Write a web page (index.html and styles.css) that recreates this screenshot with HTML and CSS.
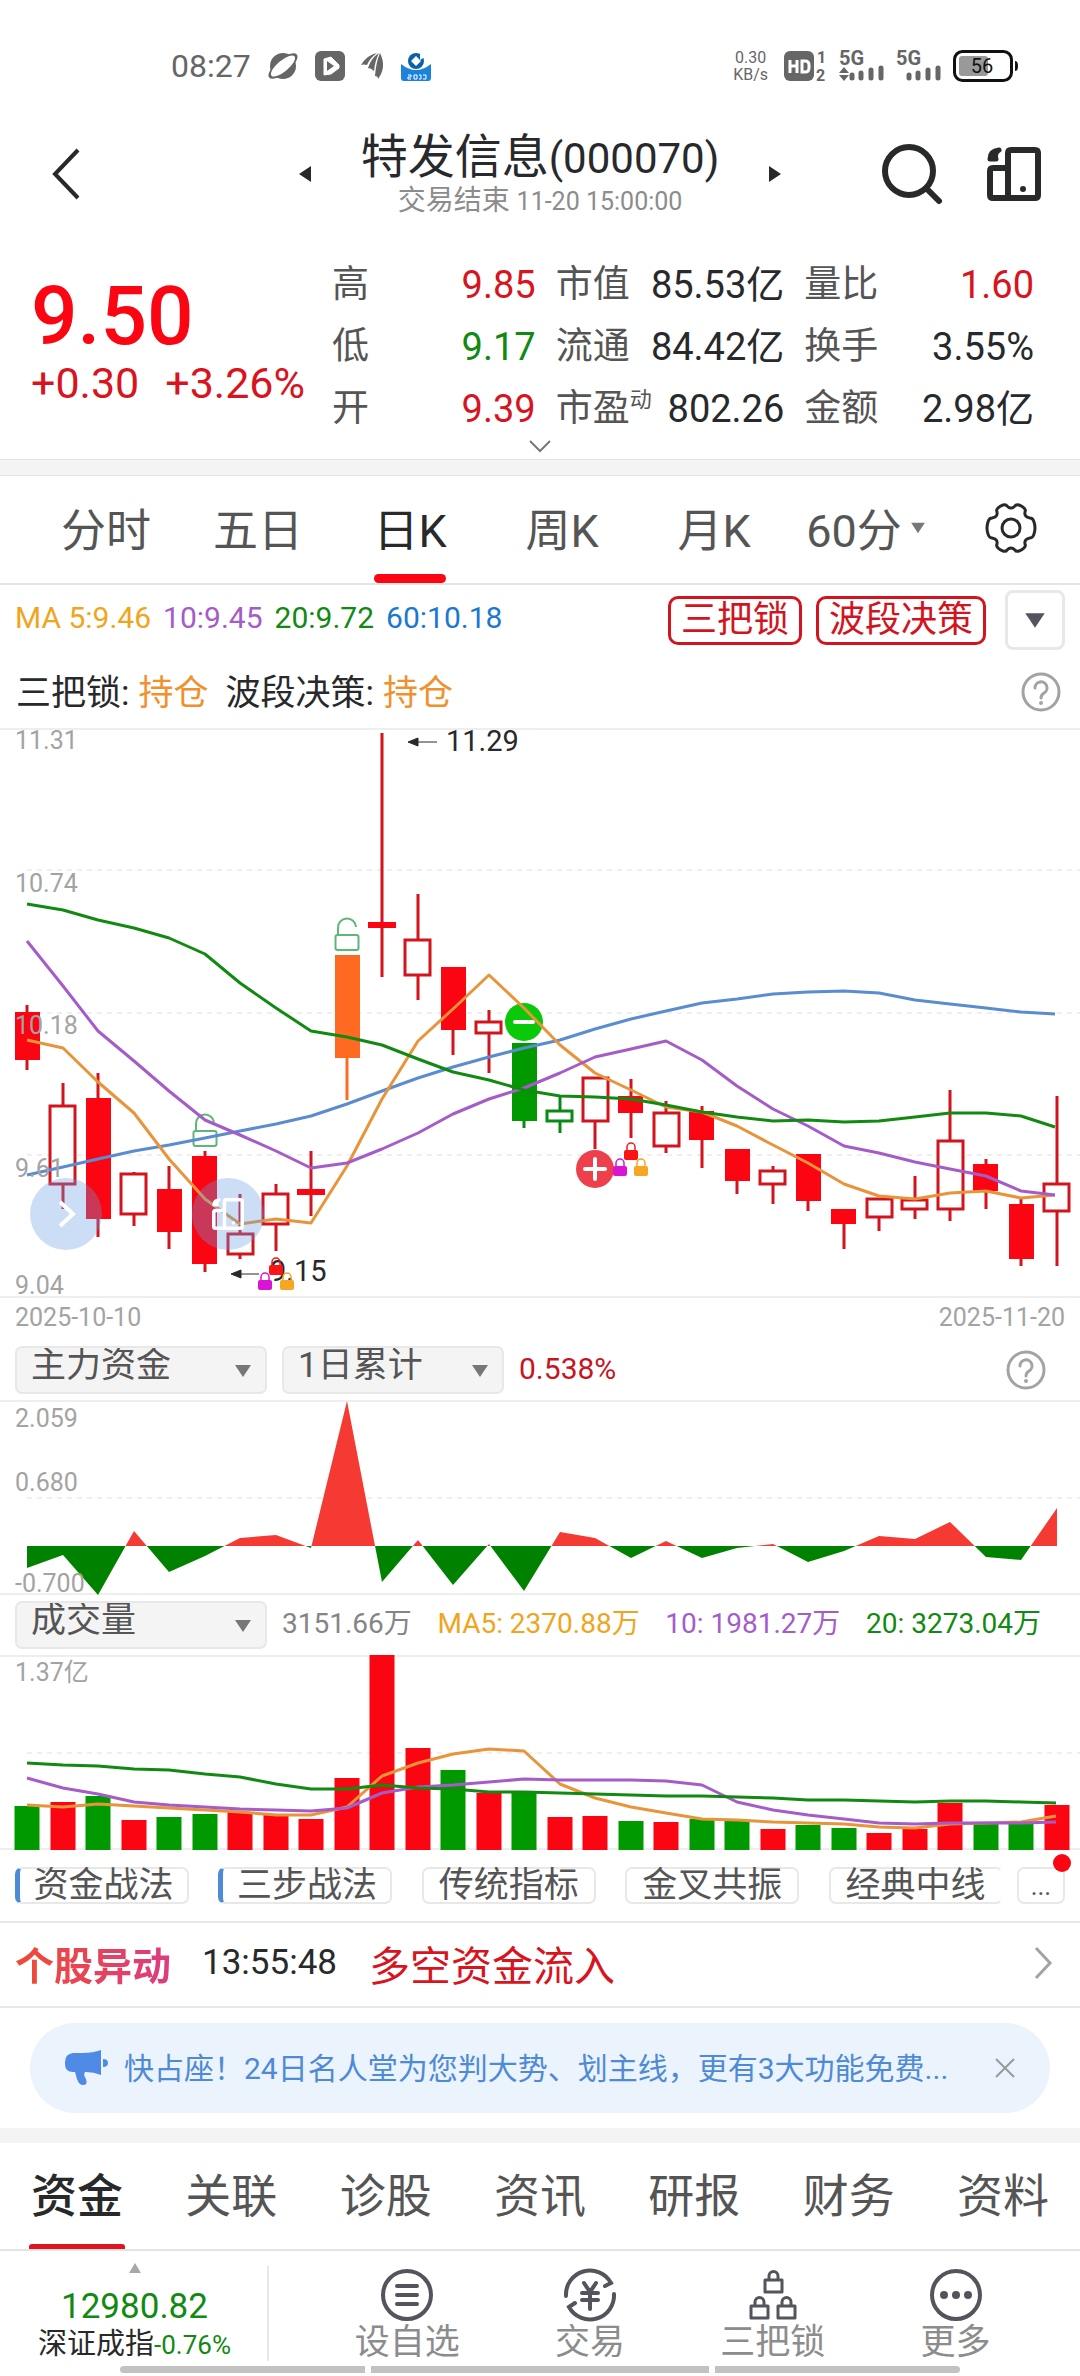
FILE: index.html
```html
<!DOCTYPE html>
<html lang="zh-CN">
<head>
<meta charset="utf-8">
<meta name="viewport" content="width=device-width, initial-scale=1">
<title>特发信息(000070)</title>
<link rel="stylesheet" href="styles.css">
</head>
<body>
<svg class="defs" aria-hidden="true">
  <defs>
    <symbol id="help" viewBox="0 0 40 40"><circle cx="20" cy="20" r="18" fill="none" stroke="#a3a3a3" stroke-width="3"/><path d="M14 16a6 6 0 1 1 9 5q-3 2-3 5" fill="none" stroke="#a3a3a3" stroke-width="3" stroke-linecap="round"/><circle cx="20" cy="31" r="2" fill="#a3a3a3"/></symbol>
    <symbol id="down" viewBox="0 0 18 14"><path d="M1 1h16l-8 12z" fill="currentColor"/></symbol>
    <symbol id="lock" viewBox="0 0 14 19"><path d="M3 9V6a4 4 0 0 1 8 0v3" fill="none" stroke="currentColor" stroke-width="1.5"/><rect y="9" width="14" height="10" rx="2" fill="currentColor"/></symbol>
    <symbol id="unlock" viewBox="0 0 26 36"><path d="M4 18v-7a9 9 0 0 1 18-1" fill="none" stroke="#5cb878" stroke-width="2"/><rect x="1.5" y="18" width="23" height="15" rx="2" fill="none" stroke="#5cb878" stroke-width="2"/></symbol>
    <symbol id="phones" viewBox="0 0 54 54"><path d="M21 51V6q0-3 3-3h24q3 0 3 3v42q0 3-3 3H6q-3 0-3-3V24q0-3 3-3h15" fill="none" stroke="currentColor" stroke-width="6" stroke-linejoin="round"/><path d="M12 3Q3 4 3 12H9Q7 6 12 3Z" fill="currentColor" stroke="currentColor" stroke-width="5" stroke-linejoin="round"/><circle cx="36" cy="42" r="3" fill="currentColor"/></symbol>
    <symbol id="openlock" viewBox="0 0 21 25"><path d="M6 11V7a4.500 4.500 0 0 1 9 0v4M2 11h17v12H2z" fill="none" stroke="currentColor" stroke-width="3" stroke-linejoin="round"/></symbol>
  </defs>
</svg>

<div class="status">
  <div class="status-side">
    <span class="clock">08:27</span>
    <svg width="32" height="30" viewBox="0 0 32 30"><circle cx="16" cy="15" r="13" fill="#666"/><ellipse cx="16" cy="15" rx="18" ry="7" transform="rotate(-40 16 15)" fill="#666"/><ellipse cx="16" cy="15" rx="15" ry="5.5" transform="rotate(-40 16 15)" fill="#fff"/></svg>
    <svg width="30" height="30" viewBox="0 0 30 30"><rect width="30" height="30" rx="6" fill="#666"/><path d="M9 8l7-2 8 8v3l-8 6-7 1z" fill="#fff" stroke="#fff" stroke-linejoin="round"/><path d="M12 10l7 5-7 5z" fill="#666"/></svg>
    <svg width="24" height="28" viewBox="0 0 24 28"><path d="M0 13Q6 3 16 1 9 6 6 13 3 12 0 13ZM7 16Q10 6 18 1 14 9 13 19 10 16 7 16ZM14 24Q15 10 19 1 26 15 17 27 17 24 14 24Z" fill="#666"/></svg>
    <svg width="30" height="30" viewBox="0 0 30 30"><path d="M0 13q15 12 30 0v14q0 3-3 3H3q-3 0-3-3z" fill="#1c83dc"/><circle cx="15" cy="10" r="8" fill="#0a62a8"/><path d="M15 5l5 5-5 5-5-5zM19 2l5 4-5 3z" fill="#fff"/><path d="M7 24h3v2H7v2h3M13 24h3v4h-3zM18 24h2v4h-2M22 24h3v4h-3" fill="none" stroke="#fff"/></svg>
  </div>
  <div class="status-side status-right">
    <span class="rate">0.30<br>KB/s</span>
    <svg width="44" height="30" viewBox="0 0 44 30" fill="#666"><rect width="30" height="30" rx="6"/><path d="M6 9v13M13 9v13M6 15h7M18 10v11h3q4 0 4-4v-3q0-4-4-4z" fill="none" stroke="#fff" stroke-width="3"/><text x="33" y="12" class="sim">1</text><text x="32" y="30" class="sim">2</text></svg>
    <svg width="46" height="30" viewBox="0 0 46 30" fill="#666"><text x="0" y="14" class="net">5G</text><path d="M5 16l5 6H0zM5 30l5-6H0z"/><path d="M13 24v3M22 22v5M32 19v8M42 17v10" stroke="#666" stroke-width="5" stroke-linecap="round"/></svg>
    <svg width="46" height="30" viewBox="0 0 46 30" fill="#666"><text x="0" y="14" class="net">5G</text><path d="M13 24v3M22 22v5M32 19v8M42 17v10" stroke="#666" stroke-width="5" stroke-linecap="round"/></svg>
    <svg width="66" height="32" viewBox="0 0 66 32"><rect x="1.5" y="1.5" width="57" height="29" rx="8" fill="none" stroke="#111" stroke-width="3"/><rect x="6" y="6" width="29" height="20" rx="3" fill="#999"/><path d="M62 11q3 0 3 5t-3 5z" fill="#111"/><text x="29" y="23" class="charge" text-anchor="middle">56</text></svg>
  </div>
</div>

<header class="head">
  <button class="plain" aria-label="返回"><svg width="28" height="52" viewBox="0 0 28 52"><path d="M25 2L2 26l23 24" fill="none" stroke="#28292b" stroke-width="4"/></svg></button>
  <div class="head-mid">
    <button class="plain" aria-label="上一只"><svg width="12" height="16" viewBox="0 0 12 16"><path d="M0 8L12 0v16z" fill="#28292b"/></svg></button>
    <div class="title">
      <h1>特发信息<span>(000070)</span></h1>
      <p>交易结束 <span>11-20 15:00:00</span></p>
    </div>
    <button class="plain" aria-label="下一只"><svg width="12" height="16" viewBox="0 0 12 16"><path d="M12 8L0 0v16z" fill="#28292b"/></svg></button>
  </div>
  <div class="head-end">
    <button class="plain" aria-label="搜索"><svg width="60" height="60" viewBox="0 0 60 60" fill="none" stroke="#28292b" stroke-width="6" stroke-linecap="round"><circle cx="27" cy="27" r="24"/><path d="M45 45l12 12"/></svg></button>
    <button class="plain" aria-label="分屏"><svg width="54" height="54"><use href="#phones"/></svg></button>
  </div>
</header>

<section class="quote">
  <div class="price">
    <strong>9.50</strong>
    <p><span>+0.30</span><span>+3.26%</span></p>
  </div>
  <dl class="stats">
    <div><dt>高</dt><dd class="up">9.85</dd></div>
    <div><dt>市值</dt><dd>85.53亿</dd></div>
    <div><dt>量比</dt><dd class="up">1.60</dd></div>
    <div><dt>低</dt><dd class="down">9.17</dd></div>
    <div><dt>流通</dt><dd>84.42亿</dd></div>
    <div><dt>换手</dt><dd>3.55%</dd></div>
    <div><dt>开</dt><dd class="up">9.39</dd></div>
    <div><dt>市盈<sup>动</sup></dt><dd>802.26</dd></div>
    <div><dt>金额</dt><dd>2.98亿</dd></div>
  </dl>
</section>
<button class="plain expand" aria-label="展开"><svg width="22" height="12" viewBox="0 0 22 12"><path d="M1 1l10 10L21 1" fill="none" stroke="#777" stroke-width="2"/></svg></button>
<div class="band band-lined"></div>

<nav class="periods">
  <button>分时</button>
  <button>五日</button>
  <button class="on">日K</button>
  <button>周K</button>
  <button>月K</button>
  <button>60分<svg width="16" height="12"><use href="#down"/></svg></button>
  <button aria-label="设置"><svg width="50" height="50" viewBox="0 0 50 50" fill="none" stroke="#28292b" stroke-width="3" stroke-linejoin="round"><path d="M17 2q3-1 4 1 4 4 8 0 1-2 4-1 3 1 5 3 2 2 1 4-1 5 5 6 3 0 4 4 2 6 0 12-1 4-4 4-6 1-5 6 1 2-1 4-2 2-5 3-3 1-4-1-4-4-8 0-1 2-4 1-3-1-5-3-2-2-1-4 1-5-5-6-3 0-4-4-2-6 0-12 1-4 4-4 6-1 5-6-1-2 1-4 2-2 5-3z"/><circle cx="25" cy="25" r="9"/></svg></button>
</nav>

<div class="ma-row">
  <p class="ma"><span class="c5">MA 5:9.46</span><span class="c10">10:9.45</span><span class="c20">20:9.72</span><span class="c60">60:10.18</span></p>
  <button class="tag">三把锁</button>
  <button class="tag">波段决策</button>
  <button class="more-ind" aria-label="更多指标"><svg width="22" height="17"><use href="#down"/></svg></button>
</div>
<div class="signal">
  <p><span>三把锁:</span><b>持仓</b></p>
  <p><span>波段决策:</span><b>持仓</b></p>
  <button class="plain help" aria-label="帮助"><svg width="40" height="40"><use href="#help"/></svg></button>
</div>

<div class="kline">
  <svg class="chart" viewBox="0 0 1080 570">
    <path d="M0 1H1080M0 569H1080" stroke="#eee" stroke-width="2"/>
    <path d="M27 142H1080M27 285H1080M27 427H1080" stroke="#efefef" stroke-width="2" stroke-dasharray="5 5"/>
    <path d="M27 277V342M63 355V481M98 345V509M134 444V498M169 438V521M205 423V544M240 466V531M276 456V523M311 423V488M382 5V249M418 166V272M453 239V327M489 282V345M595 349V421M631 351V410M666 373V425M702 378V440M737 421V466M773 438V476M808 426V483M844 481V521M879 470V503M915 448V491M950 362V493M986 431V481M1021 470V538M1057 368V538" stroke="#d2141e" stroke-width="3"/>
    <g fill="#fa0511">
      <rect x="15" y="284" width="25" height="48"/><rect x="86" y="370" width="25" height="121"/><rect x="157" y="461" width="25" height="43"/><rect x="192" y="428" width="25" height="108"/><rect x="297" y="461" width="28" height="6"/><rect x="368" y="194" width="28" height="6"/><rect x="441" y="239" width="25" height="63"/><rect x="618" y="368" width="25" height="17"/><rect x="689" y="383" width="25" height="29"/><rect x="725" y="421" width="25" height="32"/><rect x="796" y="426" width="25" height="47"/><rect x="831" y="481" width="25" height="15"/><rect x="973" y="436" width="25" height="27"/><rect x="1009" y="476" width="25" height="55"/>
    </g>
    <g fill="#fff" stroke="#d2141e" stroke-width="3">
      <rect x="50" y="378" width="25" height="78"/><rect x="121" y="446" width="25" height="40"/><rect x="228" y="506" width="25" height="20"/><rect x="263" y="466" width="25" height="30"/><rect x="405" y="212" width="25" height="35"/><rect x="476" y="294" width="25" height="11"/><rect x="583" y="350" width="25" height="43"/><rect x="654" y="385" width="25" height="33"/><rect x="760" y="443" width="25" height="13"/><rect x="867" y="471" width="25" height="18"/><rect x="902" y="472" width="25" height="9"/><rect x="938" y="413" width="25" height="68"/><rect x="1044" y="456" width="25" height="27"/>
    </g>
    <path d="M347 330V372" stroke="#ff6a22" stroke-width="3"/><rect x="335" y="227" width="25" height="103" fill="#ff6a22"/>
    <path d="M524 315V400M560 369V405" stroke="#0a8a14" stroke-width="3"/><rect x="512" y="315" width="25" height="78" fill="#009a00"/><rect x="547" y="383" width="25" height="10" fill="#fff" stroke="#0a8a14" stroke-width="3"/>
    <use href="#unlock" x="334" y="189" width="26" height="36"/><use href="#unlock" x="192" y="385" width="26" height="36"/>
    <circle cx="524" cy="294" r="19" fill="#0ac80a"/><path d="M515 294h18" stroke="#fff" stroke-width="4" stroke-linecap="round"/>
    <g fill="none" stroke-width="3" stroke-linejoin="round">
      <polyline stroke="#5a8ccf" points="27,447 63,439 98,431 134,423 169,417 205,410 240,403 276,396 311,388 347,376 382,363 418,350 453,339 489,329 524,320 560,312 595,301 631,291 666,283 702,275 737,271 773,266 808,264 844,263 879,265 915,272 950,276 986,280 1021,284 1055,286"/>
      <polyline stroke="#e8943a" points="27,312 63,320 98,354 134,385 169,431 205,471 240,496 276,491 311,495 347,438 382,371 418,313 453,281 489,247 524,280 560,317 595,345 631,362 666,379 702,384 737,398 773,417 808,435 844,456 879,468 915,471 950,465 986,463 1021,470 1055,467"/>
      <polyline stroke="#a55cc8" points="27,213 63,258 98,303 134,333 169,363 205,392 240,407 276,423 311,440 347,435 382,421 418,405 453,386 489,371 524,360 560,345 595,329 631,321 666,313 702,332 737,358 773,381 808,398 844,418 879,425 915,434 950,441 986,448 1021,463 1055,467"/>
      <polyline stroke="#128a12" points="27,176 63,182 98,192 134,200 169,210 205,226 240,255 276,280 311,303 347,309 382,317 418,331 453,344 489,352 524,362 560,368 595,369 631,371 666,377 702,384 737,389 773,393 808,392 844,394 879,393 915,389 950,385 986,385 1021,388 1055,399"/>
    </g>
    <g fill="#a3a3a3" class="axis"><text x="15" y="21">11.31</text><text x="15" y="164">10.74</text><text x="15" y="306">10.18</text><text x="15" y="449">9.61</text><text x="15" y="566">9.04</text></g>
    <path d="M408 14l10-4v8zM418 14h19M231 546l10-4v8zM241 546h18" fill="#28292b" stroke="#28292b"/>
    <g fill="#28292b" class="peak"><text x="446" y="23">11.29</text><text x="270" y="553">9.15</text></g>
    <circle cx="595" cy="441" r="19" fill="#ee404c"/><path d="M585 441h20M595 431v20" stroke="#fff" stroke-width="4" stroke-linecap="round"/>
    <g color="#fa1414"><use href="#lock" x="624" y="413" width="14" height="19"/><use href="#lock" x="269" y="528" width="14" height="19"/></g>
    <g color="#d914d2"><use href="#lock" x="613" y="429" width="14" height="19"/><use href="#lock" x="258" y="543" width="14" height="19"/></g>
    <g color="#f5a623"><use href="#lock" x="634" y="429" width="14" height="19"/><use href="#lock" x="280" y="543" width="14" height="19"/></g>
  </svg>
  <div class="floats">
    <button aria-label="展开工具"><svg width="24" height="30" viewBox="0 0 24 30"><path d="M6 3l13 12L6 27" fill="none" stroke="#fff" stroke-width="4"/></svg></button>
    <button aria-label="分屏"><svg width="32" height="32"><use href="#phones"/></svg></button>
  </div>
</div>
<div class="dates"><span>2025-10-10</span><span>2025-11-20</span></div>

<div class="picker">
  <label class="drop"><select aria-label="指标"><option>主力资金</option></select><svg width="18" height="14"><use href="#down"/></svg></label>
  <label class="drop drop-short"><select aria-label="周期"><option>1日累计</option></select><svg width="18" height="14"><use href="#down"/></svg></label>
  <span class="ratio">0.538%</span>
  <button class="plain help" aria-label="帮助"><svg width="40" height="40"><use href="#help"/></svg></button>
</div>
<svg class="chart" viewBox="0 0 1080 195">
  <defs>
    <clipPath id="above"><rect width="1080" height="146"/></clipPath>
    <clipPath id="below"><rect y="146" width="1080" height="50"/></clipPath>
    <polygon id="flow" points="27,146 27,168 63,155 98,195 134,131 169,172 205,156 240,138 276,135 311,148 347,1 382,182 418,140 453,185 489,144 524,191 560,132 595,138 631,158 666,141 702,158 737,148 773,144 808,162 844,151 879,136 915,139 950,122 986,157 1021,160 1057,108 1057,146"/>
  </defs>
  <path d="M0 1H1080M0 194H1080" stroke="#eee" stroke-width="2"/>
  <path d="M27 98H1080" stroke="#efefef" stroke-width="2" stroke-dasharray="5 5"/>
  <use href="#flow" fill="#f43a32" clip-path="url(#above)"/><use href="#flow" fill="#008200" clip-path="url(#below)"/>
  <g fill="#a3a3a3" class="axis"><text x="15" y="27">2.059</text><text x="15" y="91">0.680</text><text x="15" y="192">-0.700</text></g>
</svg>

<div class="picker picker-vol">
  <label class="drop"><select aria-label="副图指标"><option>成交量</option></select><svg width="18" height="14"><use href="#down"/></svg></label>
  <p class="vols"><span>3151.66万</span><span class="c5">MA5: 2370.88万</span><span class="c10">10: 1981.27万</span><span class="c20">20: 3273.04万</span></p>
</div>
<svg class="chart" viewBox="0 0 1080 195">
  <path d="M0 1H1080M0 194H1080" stroke="#eee" stroke-width="2"/>
  <path d="M27 98H1080" stroke="#efefef" stroke-width="2" stroke-dasharray="5 5"/>
  <g stroke-width="25">
    <path stroke="#fa0511" d="M63 195V147M134 195V165M240 195V157M276 195V160M311 195V164M347 195V123M382 195V0M418 195V93M489 195V138M560 195V162M595 195V161M666 195V167M773 195V174M879 195V178M915 195V174M950 195V148M1057 195V150"/>
    <path stroke="#009a00" d="M27 195V151M98 195V141M169 195V162M205 195V159M453 195V115M524 195V137M631 195V166M702 195V164M737 195V166M808 195V170M844 195V173M986 195V168M1021 195V169"/>
  </g>
  <g fill="none" stroke-width="3" stroke-linejoin="round">
    <polyline stroke="#e8943a" points="27,150 63,152 98,149 134,151 169,153 205,155 240,157 276,160 311,160 347,152 382,121 418,108 453,99 489,94 524,96 560,129 595,143 631,152 666,158 702,164 737,165 773,167 808,168 844,169 879,172 915,173 950,169 986,168 1021,167 1056,161"/>
    <polyline stroke="#a55cc8" points="27,123 63,133 98,139 134,147 169,150 205,152 240,154 276,155 311,156 347,153 382,138 418,132 453,130 489,127 524,124 560,125 595,125 631,125 666,126 702,130 737,147 773,155 808,160 844,164 879,168 915,169 950,168 986,168 1021,168 1056,167"/>
    <polyline stroke="#128a12" points="27,108 63,110 98,111 134,114 169,115 205,119 240,122 276,129 311,134 347,134 382,130 418,133 453,134 489,137 524,137 560,138 595,139 631,140 666,141 702,141 737,142 773,143 808,145 844,145 879,146 915,147 950,146 986,146 1021,147 1056,148"/>
  </g>
  <text x="15" y="26" fill="#a3a3a3" class="axis">1.37亿</text>
</svg>

<div class="chips">
  <button class="marked">资金战法</button>
  <button class="marked">三步战法</button>
  <button>传统指标</button>
  <button>金叉共振</button>
  <button class="faded">经典中线</button>
  <button class="chip-more">...<i></i></button>
</div>

<a class="alert" href="#move">
  <b>个股异动</b><time>13:55:48</time><span>多空资金流入</span>
  <svg width="18" height="34" viewBox="0 0 18 34"><path d="M2 2l14 15L2 32" fill="none" stroke="#a3a3a3" stroke-width="3"/></svg>
</a>

<div class="notice-wrap">
  <div class="notice">
    <svg width="44" height="36" viewBox="0 0 44 36" fill="#4f8ae6"><path d="M0 12q0-8 8-9h10Q28 3 36 0v25q-7-3-15-3h-1q-2 3 1 7 2 6-3 6-4 0-6-6l-2-7H8q-8 0-8-8zM38 9q5 0 5 4t-5 4z"/></svg>
    <p>快占座！24日名人堂为您判大势、划主线，更有3大功能免费...</p>
    <button class="plain" aria-label="关闭"><svg width="20" height="20" viewBox="0 0 20 20"><path d="M1 1l18 18M19 1L1 19" stroke="#999" stroke-width="2"/></svg></button>
  </div>
</div>
<div class="band"></div>

<nav class="sections">
  <a class="on" href="#zj">资金</a><a href="#gl">关联</a><a href="#zg">诊股</a><a href="#zx">资讯</a><a href="#yb">研报</a><a href="#cw">财务</a><a href="#zl">资料</a>
</nav>

<footer class="bottom">
  <a class="index" href="#index">
    <svg width="12" height="10" viewBox="0 0 12 10"><path d="M6 0l6 10H0z" fill="#a8a8a8"/></svg>
    <strong>12980.82</strong>
    <span>深证成指<em>-0.76%</em></span>
  </a>
  <nav class="actions">
    <button><svg width="54" height="54" viewBox="0 0 54 54" fill="none" stroke="#53545c" stroke-width="4" stroke-linecap="round"><circle cx="27" cy="27" r="24"/><path d="M17 18h20M17 27h20M17 36h20"/></svg>设自选</button>
    <button><svg width="54" height="54" viewBox="0 0 54 54" fill="none" stroke="#53545c" stroke-width="4" stroke-linecap="round"><path d="M3 28A24 24 0 0 1 48 15l-6 3M51 26A24 24 0 0 1 6 39l6-4M21 15l6 9 6-9M19 25h16M19 32h16M27 25v16"/></svg>交易</button>
    <button><svg width="54" height="54" viewBox="0 0 54 54" color="#53545c"><use href="#openlock" x="17" y="1" width="21" height="25"/><use href="#openlock" x="3" y="27" width="21" height="25"/><use href="#openlock" x="30" y="27" width="21" height="25"/></svg>三把锁</button>
    <button><svg width="54" height="54" viewBox="0 0 54 54" fill="#53545c"><circle cx="27" cy="27" r="24" fill="none" stroke="#53545c" stroke-width="4"/><circle cx="15" cy="27" r="4"/><circle cx="27" cy="27" r="4"/><circle cx="39" cy="27" r="4"/></svg>更多</button>
  </nav>
  <div class="home"><i></i><i></i><i></i></div>
</footer>
</body>
</html>
```
FILE: styles.css
```css
* { box-sizing: border-box; }
body {
  margin: 0;
  background: #fff;
  color: #28292b;
  font-family: Roboto, "Noto Sans CJK SC", sans-serif;
  font-size: 35px;
}
h1, p, dl, dd { margin: 0; font-weight: 400; }
a { color: inherit; text-decoration: none; }
button { font: inherit; color: inherit; margin: 0; padding: 0; background: none; border: 0; white-space: nowrap; }
svg { display: block; flex: none; overflow: visible; }
.defs { position: absolute; width: 0; height: 0; }
.plain { display: flex; }
.chart { width: 100%; height: auto; }
.axis { font-size: 25px; }
.peak { font-size: 29px; }
.up { color: #d8141e; }
.down { color: #128a12; }
.c5 { color: #efa51e; }
.c10 { color: #a55cc8; }
.c20 { color: #128a12; }
.c60 { color: #1a78d2; }

/* status bar */
.status { display: flex; justify-content: space-between; align-items: center; height: 100px; padding: 32px 61px 0 171px; color: #666; }
.status-side { display: flex; align-items: center; gap: 16px; }
.status-right { gap: 11px; }
.clock { font-size: 32px; line-height: 32px; }
.rate { font-size: 16px; line-height: 17px; text-align: center; margin-right: 5px; }
.sim { font-size: 16px; font-weight: 700; }
.net { font-size: 20px; font-weight: 700; }
.charge { font-size: 20px; fill: #111; }

/* title bar */
.head { display: grid; grid-template-columns: 1fr auto 1fr; align-items: center; height: 148px; padding: 0 39px 0 53px; }
.head-mid { display: flex; align-items: center; gap: 50px; padding-right: 14px; }
.title { text-align: center; min-width: 356px; }
.title h1 { font-size: 47px; line-height: 52px; white-space: nowrap; }
.title h1 span { font-size: 42px; }
.title p { font-size: 28px; line-height: 32px; color: #8c8c8c; }
.title p span { font-size: 25px; }
.head-end { display: flex; justify-content: flex-end; align-items: center; gap: 45px; }

/* quote */
.quote { display: grid; grid-template-columns: 301px 1fr; padding: 6px 46px 0 31px; }
.price { padding-top: 17px; color: #fa0511; }
.price strong { display: block; font-size: 82px; line-height: 90px; font-weight: 500; }
.price p { display: flex; gap: 26px; font-size: 43px; line-height: 44px; color: #d8141e; white-space: nowrap; }
.stats { display: grid; grid-template-columns: 204fr 229fr 230fr; column-gap: 20px; }
.stats div { display: flex; justify-content: space-between; line-height: 62px; white-space: nowrap; }
.stats dt { font-size: 37px; color: #555; }
.stats dd { font-size: 38px; }
.stats sup { font-size: 22px; line-height: 22px; vertical-align: 14px; }
.expand { width: 100%; height: 19px; justify-content: center; }
.band { height: 15px; background: #f4f4f4; }
.band-lined { border: solid #e4e4e4; border-width: 1px 0; height: 17px; }

/* period tabs */
.periods { display: grid; grid-template-columns: repeat(6, 152fr) 138fr; height: 109px; padding-left: 30px; border-bottom: 2px solid #e4e4e4; }
.periods button { position: relative; display: flex; align-items: center; justify-content: center; padding-bottom: 4px; font-size: 45px; color: #555; gap: 8px; }
.periods .on { color: #28292b; }
.periods .on::after { content: ""; position: absolute; bottom: 0; left: 50%; width: 72px; height: 9px; margin-left: -36px; border-radius: 5px; background: #fa0511; }
.periods button > svg { color: #777; }

/* indicator rows */
.ma-row { display: flex; align-items: center; height: 70px; padding: 0 15px; }
.ma { display: flex; gap: 12px; flex: 1; padding-bottom: 6px; font-size: 30px; white-space: nowrap; }
.tag { height: 49px; padding: 0 10px; margin-right: 14px; border: 3px solid #d2141e; border-radius: 10px; color: #d2141e; font-size: 36px; line-height: 40px; }
.more-ind { display: grid; place-items: center; width: 60px; height: 60px; margin-left: 5px; border: 3px solid #e8e8e8; border-radius: 8px; color: #53545c; }
.signal { display: flex; align-items: center; gap: 17px; height: 73px; padding: 0 19px 0 16px; }
.signal p { display: flex; gap: 9px; padding-bottom: 4px; white-space: nowrap; }
.signal b { font-weight: 400; color: #f0912d; }
.help { margin-left: auto; }

/* charts */
.kline { position: relative; }
.floats { position: absolute; left: 30px; bottom: 48px; display: flex; gap: 90px; }
.floats button { display: grid; place-items: center; width: 72px; height: 72px; border-radius: 50%; background: rgba(105, 155, 228, .34); color: #fff; }
.dates { display: flex; justify-content: space-between; padding: 0 15px; font-size: 25px; line-height: 40px; color: #a3a3a3; }
.picker { display: flex; align-items: center; gap: 15px; height: 62px; padding: 2px 34px 0 15px; }
.picker-vol { height: 60px; padding-top: 0; padding-right: 39px; }
.drop { position: relative; width: 252px; }
.drop-short { width: 222px; }
.drop select { appearance: none; display: block; width: 100%; height: 48px; padding: 0 14px 10px; border: 2px solid #e8e8e8; border-radius: 7px; background: #f4f4f4; font: inherit; line-height: 36px; color: #555; }
.drop svg { position: absolute; right: 15px; top: 18px; color: #777; }
.ratio { padding-bottom: 4px; font-size: 30px; color: #c8141e; }
.vols { display: flex; justify-content: space-between; flex: 1; padding-bottom: 8px; font-size: 28px; color: #858585; white-space: nowrap; }

/* strategy chips */
.chips { display: flex; justify-content: space-between; height: 73px; padding: 17px 15px 0; border-bottom: 2px solid #e8e8e8; }
.chips button { position: relative; width: 174px; height: 37px; border: 2px solid #e8e8e8; border-radius: 7px; color: #555; line-height: 32px; }
.chips .marked { border-left: 5px solid #4f8ad6; }
.chips .faded { border-right-color: transparent; margin-right: -15px; }
.chips .chip-more { width: 48px; font-size: 26px; }
.chip-more i { position: absolute; right: -8px; top: -15px; width: 18px; height: 18px; border-radius: 50%; background: #fa0511; }

/* unusual movement */
.alert { display: flex; align-items: center; height: 85px; padding: 0 28px 4px 15px; border-bottom: 2px solid #e8e8e8; white-space: nowrap; }
.alert b { font-size: 39px; background: linear-gradient(90deg, #f04b32, #dc3c82); -webkit-background-clip: text; background-clip: text; color: transparent; }
.alert time { margin: 0 32px 0 31px; font-size: 35px; }
.alert span { font-size: 41px; color: #d8141e; }
.alert svg { margin-left: auto; }

/* notice */
.notice-wrap { padding: 15px 30px; }
.notice { display: flex; align-items: center; height: 90px; padding: 0 35px; border-radius: 45px; background: #ebf3fc; color: #4f8ad6; }
.notice p { flex: 1; margin: 0 15px; padding-bottom: 4px; font-size: 30px; white-space: nowrap; }

/* section tabs */
.sections { display: flex; justify-content: space-between; height: 108px; padding: 0 29px; border-bottom: 2px solid #e4e4e4; font-size: 46px; line-height: 106px; color: #555; }
.sections a { position: relative; padding: 0 2px; }
.sections .on { font-weight: 500; color: #28292b; }
.sections .on::after { content: ""; position: absolute; left: 0; right: 0; bottom: 0; height: 5px; border-radius: 3px 3px 0 0; background: #e0141e; }

/* bottom bar */
.bottom { position: relative; display: flex; height: 125px; }
.index { display: flex; flex-direction: column; align-items: center; width: 269px; padding-top: 12px; position: relative; }
.index::after { content: ""; position: absolute; right: 0; top: 15px; width: 2px; height: 95px; background: #e8e8e8; }
.index strong { margin-top: 14px; font-size: 35px; line-height: 40px; font-weight: 400; color: #128a12; }
.index span { font-size: 29px; line-height: 34px; }
.index em { font-style: normal; font-size: 26px; color: #128a12; }
.actions { display: grid; grid-template-columns: repeat(4, 1fr); flex: 1; padding: 17px 33px 0 47px; }
.actions button { display: flex; flex-direction: column; align-items: center; height: 96px; line-height: 42px; color: #8c8c8c; }
.home { position: absolute; left: 120px; right: 120px; bottom: 3px; display: grid; grid-template-columns: 245fr 338fr 245fr; gap: 6px; }
.home i { height: 7px; background: #c2c2c2; }
.home i:first-child { border-radius: 4px 0 0 4px; }
.home i:last-child { border-radius: 0 4px 4px 0; }
```
